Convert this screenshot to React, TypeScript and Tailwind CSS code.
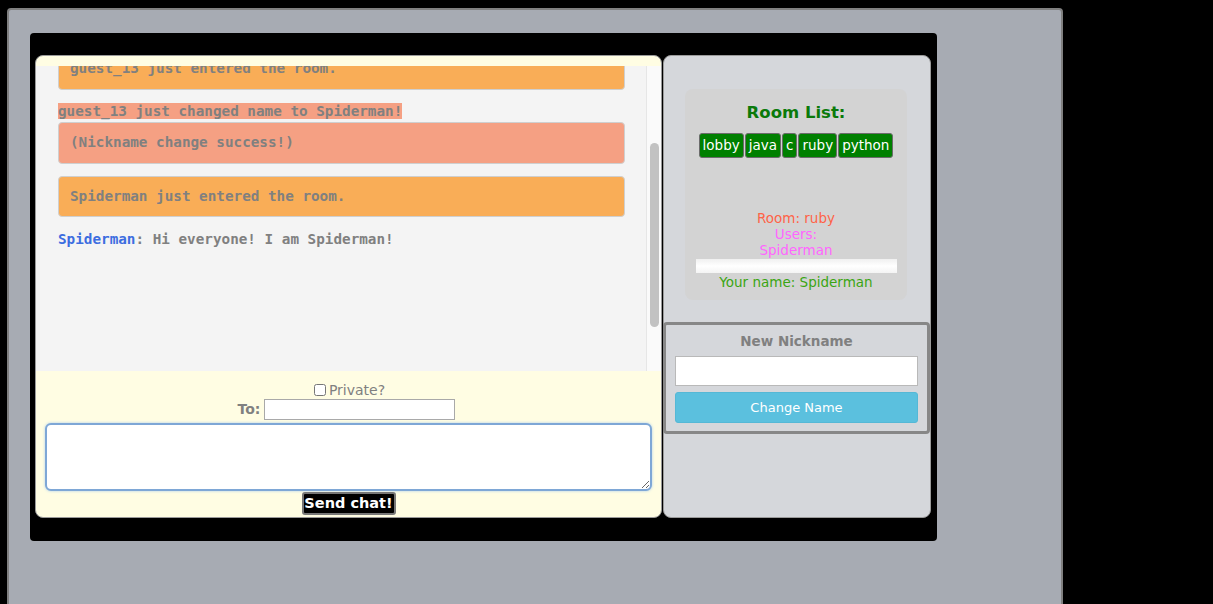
const rooms = ["lobby", "java", "c", "ruby", "python"];

function ChatPanel() {
  return (
    <div className="w-[627px] h-[463px] flex flex-col border border-[#9a9a9a] rounded-lg bg-[#fffde3] overflow-hidden">
      <div className="h-[10px] shrink-0" />
      <div className="h-[305px] shrink-0 flex bg-[#f4f4f4]">
        <div className="flex-1 overflow-hidden pl-[22px] pr-[21px] font-['DejaVu_Sans_Mono',monospace] font-bold text-[14.3px] text-[#808080]">
          <div className="-mt-[18px]">
            <div className="h-[42px] mb-[13px] flex items-center px-[11px] bg-[#f9ad57] border border-[#cfcfcf] rounded-[4px]">
              guest_13 just entered the room.
            </div>
            <div className="h-[16px] leading-[16px] mb-[3px]">
              <span className="bg-[#f5a083]">guest_13 just changed name to Spiderman!</span>
            </div>
            <div className="h-[42px] mb-[12px] flex items-center px-[11px] bg-[#f5a083] border border-[#cfcfcf] rounded-[4px]">
              (Nickname change success!)
            </div>
            <div className="h-[41px] mb-[14px] flex items-center px-[11px] bg-[#f9ad57] border border-[#cfcfcf] rounded-[4px]">
              Spiderman just entered the room.
            </div>
            <div className="leading-[16px]">
              <span className="text-[#3c6de0]">Spiderman</span>: Hi everyone! I am Spiderman!
            </div>
          </div>
        </div>
        <div className="w-[15px] shrink-0 bg-[#fafafa] border-l border-[#e6e6e6] pt-[77px] flex justify-center">
          <div className="w-[9px] h-[184px] rounded-full bg-[#c2c2c2]" />
        </div>
      </div>
      <div className="flex-1 flex flex-col items-center pt-[11px] font-['DejaVu_Sans',sans-serif] text-[14px] text-[#808080]">
        <label className="h-[16px] flex items-center gap-[3px] leading-[16px] ml-[2px]">
          <input type="checkbox" className="w-[12px] h-[12px] m-0" />
          Private?
        </label>
        <div className="mt-[1px] flex items-center gap-[4px] -ml-[4px]">
          <span className="font-bold">To:</span>
          <input type="text" className="w-[191px] h-[21px] bg-white border border-[#a9a9a9]" />
        </div>
        <textarea className="mt-[3px] w-[607px] h-[68px] bg-white border-2 border-[#7ea7d6] rounded-md shadow-[0_0_3px_#a9cdef] outline-none" />
        <button className="mt-[1px] w-[94px] h-[23px] bg-black text-white font-bold text-[14.5px] border-2 border-[#777] rounded-[3px] leading-none">
          Send chat!
        </button>
      </div>
    </div>
  );
}

function SidePanel() {
  return (
    <div className="w-[268px] h-[463px] border border-[#9a9a9a] rounded-lg bg-[#d5d7db] font-['DejaVu_Sans',sans-serif] text-[13.5px]">
      <div className="mt-[33px] ml-[21px] w-[222px] h-[211px] rounded-lg bg-[#d3d3d3] flex flex-col items-center">
        <div className="mt-[13px] text-[16.5px] font-bold text-[#0a7a0a] leading-[22px]">Room List:</div>
        <div className="mt-[9px] flex gap-[1px]">
          {rooms.map((r) => (
            <div
              key={r}
              className="h-[25px] px-[3px] flex items-center bg-[#008000] text-white border border-[#6b6b6b] rounded-[3px]"
            >
              {r}
            </div>
          ))}
        </div>
        <div className="mt-[52px] leading-[16px] text-center">
          <div className="text-[#ff6347]">Room: ruby</div>
          <div className="text-[#ff66ff]">Users:</div>
          <div className="text-[#ff66ff]">Spiderman</div>
        </div>
        <div className="mt-[1px] w-[201px] h-[14px] bg-gradient-to-b from-[#f0f0f0] via-white to-[#f4f4f4]" />
        <div className="mt-[1px] leading-[16px] text-[#3aa512]">Your name: Spiderman</div>
      </div>
      <div className="mt-[22px] -ml-[1px] w-[267px] h-[112px] border-[3px] border-[#878787] rounded-[4px] flex flex-col items-center">
        <div className="mt-[8px] font-bold text-[#808080] leading-[16px]">New Nickname</div>
        <input type="text" className="mt-[7px] w-[243px] h-[30px] bg-white border border-[#b9b9b9]" />
        <button className="mt-[6px] w-[243px] h-[31px] rounded-[3px] bg-[#5bc0de] border border-[#54b8d6] text-white text-[13px]">
          Change Name
        </button>
      </div>
    </div>
  );
}

export default function App() {
  return (
    <div className="w-[1213px] h-[604px] bg-black overflow-hidden pt-[8px] pl-[7px]">
      <div className="w-[1056px] h-[620px] bg-[#a7abb3] border-2 border-[#808080] rounded-t-[4px] pt-[23px] pl-[21px]">
        <div className="w-[907px] h-[508px] bg-black rounded-[4px] pt-[22px] pl-[5px] flex items-start gap-[1px]">
          <ChatPanel />
          <SidePanel />
        </div>
      </div>
    </div>
  );
}
